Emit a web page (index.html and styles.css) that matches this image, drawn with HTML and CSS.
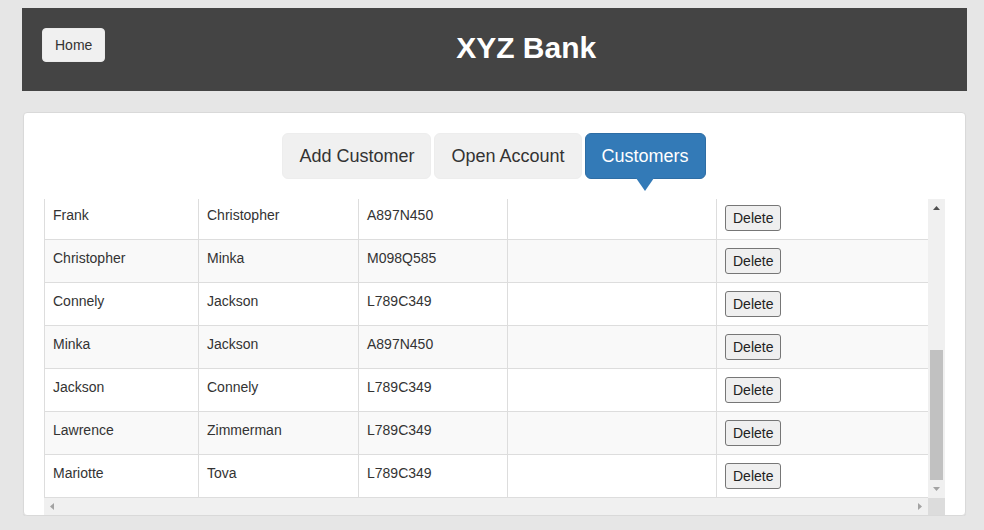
FILE: index.html
```html
<!DOCTYPE html>
<html lang="en">
<head>
<meta charset="utf-8">
<title>XYZ Bank</title>
<link rel="stylesheet" href="styles.css">
</head>
<body>
<div class="page">
  <header class="topbar">
    <button class="btn home-btn" type="button">Home</button>
    <strong class="main-heading">XYZ Bank</strong>
  </header>
  <main class="panel">
    <nav class="tabs">
      <button class="tab" type="button">Add Customer</button>
      <button class="tab" type="button">Open Account</button>
      <button class="tab tab-active" type="button">Customers</button>
    </nav>
    <div class="scroll-frame">
      <div class="viewport">
        <form class="search">
          <input class="search-input" type="text" placeholder="Search Customer">
        </form>
        <table class="customers">
          <colgroup>
            <col class="c1"><col class="c2"><col class="c3"><col class="c4"><col class="c5">
          </colgroup>
          <thead>
            <tr><th>First Name</th><th>Last Name</th><th>Post Code</th><th>Account Number</th><th>Delete Customer</th></tr>
          </thead>
          <tbody>
            <tr><td>Hermoine</td><td>Granger</td><td>E859AB</td><td>1001 1002 1003</td><td><button class="del" type="button">Delete</button></td></tr>
            <tr><td>Harry</td><td>Potter</td><td>E725JB</td><td>1004 1005 1006</td><td><button class="del" type="button">Delete</button></td></tr>
            <tr><td>Ron</td><td>Weasly</td><td>E55555</td><td>1007 1008 1009</td><td><button class="del" type="button">Delete</button></td></tr>
            <tr><td>Albus</td><td>Dumbledore</td><td>E55656</td><td>1010 1011 1012</td><td><button class="del" type="button">Delete</button></td></tr>
            <tr><td>Neville</td><td>Longbottom</td><td>E89898</td><td>1013 1014 1015</td><td><button class="del" type="button">Delete</button></td></tr>
            <tr><td>Frank</td><td>Christopher</td><td>A897N450</td><td></td><td><button class="del" type="button">Delete</button></td></tr>
            <tr><td>Christopher</td><td>Minka</td><td>M098Q585</td><td></td><td><button class="del" type="button">Delete</button></td></tr>
            <tr><td>Connely</td><td>Jackson</td><td>L789C349</td><td></td><td><button class="del" type="button">Delete</button></td></tr>
            <tr><td>Minka</td><td>Jackson</td><td>A897N450</td><td></td><td><button class="del" type="button">Delete</button></td></tr>
            <tr><td>Jackson</td><td>Connely</td><td>L789C349</td><td></td><td><button class="del" type="button">Delete</button></td></tr>
            <tr><td>Lawrence</td><td>Zimmerman</td><td>L789C349</td><td></td><td><button class="del" type="button">Delete</button></td></tr>
            <tr><td>Mariotte</td><td>Tova</td><td>L789C349</td><td></td><td><button class="del" type="button">Delete</button></td></tr>
          </tbody>
        </table>
      </div>
      <div class="vbar">
        <span class="sb-btn"><svg width="17" height="17" viewBox="0 0 17 17"><path d="M5 11 L8.5 7 L12 11 Z" fill="#505050"/></svg></span>
        <span class="vtrack"><span class="vthumb"></span></span>
        <span class="sb-btn"><svg width="17" height="17" viewBox="0 0 17 17"><path d="M5 6 L12 6 L8.5 10 Z" fill="#a3a3a3"/></svg></span>
      </div>
      <div class="hbar">
        <span class="sb-btn"><svg width="17" height="17" viewBox="0 0 17 17"><path d="M10 5 L10 12 L6 8.5 Z" fill="#a3a3a3"/></svg></span>
        <span class="htrack"></span>
        <span class="sb-btn"><svg width="17" height="17" viewBox="0 0 17 17"><path d="M7 5 L11 8.5 L7 12 Z" fill="#a3a3a3"/></svg></span>
      </div>
      <div class="corner"></div>
    </div>
  </main>
</div>
</body>
</html>
```

FILE: styles.css
```css
* { box-sizing: border-box; }

body {
  margin: 8px;
  background: #e6e6e6;
  font-family: "Liberation Sans", Arial, sans-serif;
  font-size: 14px;
  line-height: 20px;
  color: #333;
  overflow: hidden;
}

.page {
  width: 945px;
  margin-left: 14px;
}

/* Header */
.topbar {
  height: 83px;
  background: #444;
  display: flex;
  align-items: flex-start;
  padding: 20px 20px 0;
}

.btn {
  font-family: inherit;
  font-size: 14px;
  line-height: 20px;
  color: #333;
  background: #f0f0f0;
  border: 1px solid #ebebeb;
  border-radius: 4px;
  padding: 6px 12px;
  cursor: pointer;
}

.main-heading {
  flex: 1;
  text-align: center;
  color: #fff;
  font-size: 30px;
  font-weight: bold;
  line-height: 34px;
  margin-top: 3px;
}

/* Panel */
.panel {
  margin: 21px 1px 0;
  background: #fff;
  border: 1px solid #d9d9d9;
  border-radius: 4px;
  box-shadow: 0 1px 1px rgba(0, 0, 0, 0.05);
  padding: 20px 20px 0;
}

.tabs {
  display: flex;
  justify-content: center;
  gap: 3px;
  padding-right: 1px;
}

.tab {
  position: relative;
  font-family: inherit;
  font-size: 18px;
  line-height: 24px;
  padding: 10px 16px;
  color: #333;
  background: #f0f0f0;
  border: 1px solid #ededed;
  border-radius: 6px;
  cursor: pointer;
}

.tab-active {
  color: #fff;
  background: #337ab7;
  border-color: #2e6da4;
}

.tab-active::after {
  content: "";
  position: absolute;
  left: 50%;
  top: 100%;
  margin-left: -9px;
  border-left: 9px solid transparent;
  border-right: 9px solid transparent;
  border-top: 13px solid #337ab7;
}

/* Scroll frame with scrollbars */
.scroll-frame {
  margin-top: 20px;
  display: grid;
  grid-template-columns: 884px 17px;
  grid-template-rows: 299px 17px;
}

.viewport {
  overflow: hidden;
  display: flex;
  flex-direction: column;
  justify-content: flex-end;
}

.vbar,
.hbar {
  display: flex;
  background: #f0f0f0;
}

.vbar { flex-direction: column; }

.sb-btn {
  flex: 0 0 17px;
  width: 17px;
  height: 17px;
}

.sb-btn svg { display: block; }

.vtrack {
  flex: 1;
  display: flex;
  flex-direction: column;
  justify-content: flex-end;
  padding: 0 2px 1px;
}

.vthumb {
  height: 130px;
  background: #c1c1c1;
}

.htrack { flex: 1; }

.corner { background: #dcdcdc; }

.search {
  flex: 0 0 54px;
  margin: 0;
}

.search-input {
  width: 100%;
  height: 34px;
  padding: 6px 12px;
  font-family: inherit;
  font-size: 14px;
  color: #555;
  border: 1px solid #ccc;
  border-radius: 4px;
}

/* Table */
.customers {
  flex: 0 0 auto;
  width: 884px;
  table-layout: fixed;
  border-collapse: collapse;
  border: 1px solid #ddd;
}

.c1 { width: 154px; }
.c2 { width: 160px; }
.c3 { width: 149px; }
.c4 { width: 209px; }
.c5 { width: 212px; }

.customers th,
.customers td {
  padding: 8px;
  text-align: left;
  vertical-align: top;
  border: 1px solid #ddd;
  white-space: nowrap;
}

.customers th {
  font-weight: bold;
  border-bottom: 2px solid #ddd;
  height: 38px;
}

.customers td {
  height: 43px;
}

.customers tbody tr:nth-child(odd) {
  background: #f9f9f9;
}

.del {
  display: block;
  height: 26px;
  padding: 2px 7px;
  font-family: inherit;
  font-size: 14px;
  line-height: 20px;
  color: #222;
  background: #efefef;
  border: 1px solid #767676;
  border-radius: 3px;
}
```
